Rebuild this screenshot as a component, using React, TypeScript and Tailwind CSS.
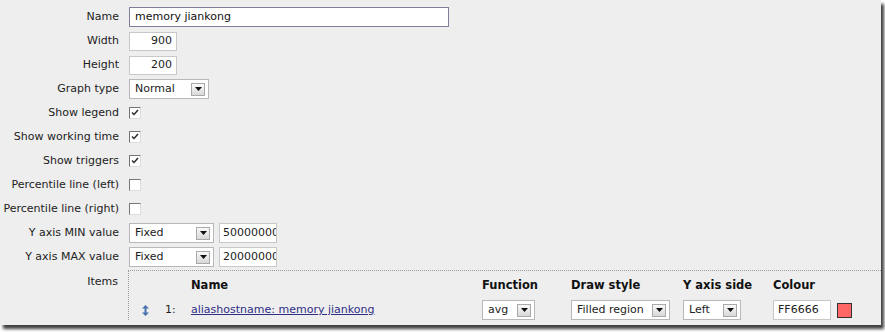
import React from "react";

const font = { fontFamily: '"DejaVu Sans", Verdana, sans-serif' };

const Arrow = () => (
  <span className="flex h-[13px] w-[14px] items-center justify-center border border-[#a9a9a9] bg-gradient-to-b from-[#fafafa] to-[#d8d8d8]">
    <svg width="7" height="4" viewBox="0 0 7 4">
      <path d="M0 0h7L3.5 4z" fill="#111" />
    </svg>
  </span>
);

const Select = ({ value, w }: { value: string; w: string }) => (
  <div className={`flex h-[20px] ${w} items-center justify-between border border-[#b8b8b8] bg-white pl-[5px] pr-[3px] text-[11px] text-[#222]`}>
    <span>{value}</span>
    <Arrow />
  </div>
);

const Check = ({ on }: { on?: boolean }) => (
  <span className="flex h-[12px] w-[12px] items-start justify-start border-t border-l border-t-[#777] border-l-[#777] border-r border-b border-r-[#ddd] border-b-[#ddd] bg-white pl-[1px] pt-[1px]">
    {on && (
      <svg width="8" height="7" viewBox="0 0 8 7">
        <path d="M1 3.5l2 2L7 1" fill="none" stroke="#222" strokeWidth="1.3" />
      </svg>
    )}
  </span>
);

const Row = ({ label, children }: { label: string; children?: React.ReactNode }) => (
  <div className="flex h-[24px] items-center">
    <div className="w-[129px] shrink-0 pr-[10px] text-right">{label}</div>
    <div className="flex items-center gap-[5px]">{children}</div>
  </div>
);

export default function App() {
  return (
    <div className="h-[332px] w-[885px] bg-white" style={font}>
      <div className="h-[325px] w-[881px] overflow-hidden bg-[#eeeeee] pt-[5px] text-[11px] text-[#222] shadow-[3px_4px_3px_rgba(0,0,0,0.75)]">
        <Row label="Name">
          <div className="flex h-[20px] w-[320px] items-center border border-[#7e8099] bg-white px-[5px] text-[#111]">memory jiankong</div>
        </Row>
        <Row label="Width">
          <div className="flex h-[19px] w-[48px] items-center justify-end border border-[#c8c8c8] bg-white px-[4px]">900</div>
        </Row>
        <Row label="Height">
          <div className="flex h-[19px] w-[48px] items-center justify-end border border-[#c8c8c8] bg-white px-[4px]">200</div>
        </Row>
        <Row label="Graph type">
          <Select value="Normal" w="w-[80px]" />
        </Row>
        <Row label="Show legend"><Check on /></Row>
        <Row label="Show working time"><Check on /></Row>
        <Row label="Show triggers"><Check on /></Row>
        <Row label="Percentile line (left)"><Check /></Row>
        <Row label="Percentile line (right)"><Check /></Row>
        <Row label="Y axis MIN value">
          <Select value="Fixed" w="w-[85px]" />
          <div className="flex h-[20px] w-[58px] items-center overflow-hidden whitespace-nowrap border border-[#c8c8c8] bg-white pl-[3px]">500000000</div>
        </Row>
        <Row label="Y axis MAX value">
          <Select value="Fixed" w="w-[85px]" />
          <div className="flex h-[20px] w-[58px] items-center overflow-hidden whitespace-nowrap border border-[#c8c8c8] bg-white pl-[3px]">200000000</div>
        </Row>
        <div className="mt-[1px] flex">
          <div className="w-[128px] shrink-0 pr-[10px] pt-[4px] text-right">Items</div>
          <div className="flex-1 border-t border-l border-dotted border-[#9a9a9a] pt-[6px]">
            <div className="grid grid-cols-[32px_30px_291px_89px_112px_90px_1fr] items-center">
              <div />
              <div />
              <div className="font-bold text-[11.5px] text-[#111]">Name</div>
              <div className="font-bold text-[11.5px] text-[#111]">Function</div>
              <div className="font-bold text-[11.5px] text-[#111]">Draw style</div>
              <div className="font-bold text-[11.5px] text-[#111]">Y axis side</div>
              <div className="font-bold text-[11.5px] text-[#111]">Colour</div>
            </div>
            <div className="mt-[6px] grid grid-cols-[32px_30px_291px_89px_112px_90px_1fr] items-center">
              <div className="flex justify-center pl-[1px]">
                <svg width="7" height="11" viewBox="0 0 7 11">
                  <path d="M3.5 0L7 3.5H4.5v4H7L3.5 11 0 7.5h2.5v-4H0z" fill="#4a72b0" />
                </svg>
              </div>
              <div className="pl-[4px]">1:</div>
              <div>
                <a href="#" className="text-[#2f2f86] underline">aliashostname: memory jiankong</a>
              </div>
              <div><Select value="avg" w="w-[53px]" /></div>
              <div><Select value="Filled region" w="w-[99px]" /></div>
              <div><Select value="Left" w="w-[58px]" /></div>
              <div className="flex items-center gap-[6px]">
                <div className="flex h-[20px] w-[58px] items-center border border-[#c8c8c8] bg-white pl-[4px]">FF6666</div>
                <div className="h-[15px] w-[15px] border border-[#333] bg-[#ff6666]" />
              </div>
            </div>
          </div>
        </div>
      </div>
    </div>
  );
}
